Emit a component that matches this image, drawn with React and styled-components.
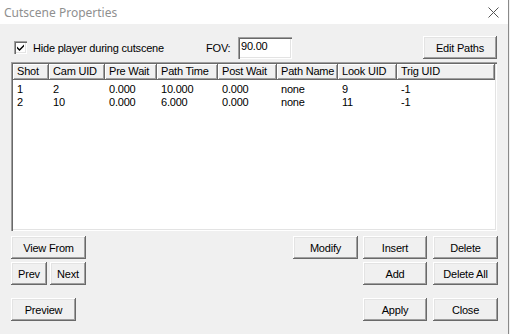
import React from "react";
import styled, { createGlobalStyle } from "styled-components";

const GlobalStyle = createGlobalStyle`
  html, body {
    margin: 0;
    padding: 0;
    background: #f0f0f0;
  }
  body {
    font-family: "Liberation Sans", Arial, sans-serif;
    font-size: 11px;
    letter-spacing: -0.2px;
    color: #000;
  }
`;

const Window = styled.div`
  width: 508px;
  height: 334px;
  background: #f0f0f0;
  border-right: 1px solid #8a8a8a;
  display: flex;
  flex-direction: column;
  overflow: hidden;
`;

const TitleBar = styled.div`
  height: 24px;
  flex: none;
  background: #fff;
  display: flex;
  align-items: center;
  justify-content: space-between;
  padding: 0 9px 0 4px;
`;

const Title = styled.span`
  font-family: "Noto Sans", "Open Sans", sans-serif;
  font-size: 12px;
  letter-spacing: 0;
  color: #8f8f8f;
`;

const Body = styled.div`
  display: flex;
  flex-direction: column;
  padding: 12px 10px 0 11px;
`;

const TopRow = styled.div`
  display: flex;
  align-items: center;
  height: 23px;
`;

const CheckLabel = styled.label`
  display: flex;
  align-items: center;
  gap: 6px;
  margin-left: 3px;
  width: 192px;
`;

const CheckBox = styled.span`
  width: 13px;
  height: 13px;
  box-sizing: border-box;
  background: #fff;
  box-shadow: inset 1px 1px #a0a0a0, inset 2px 2px #696969,
    inset -1px -1px #fff, inset -2px -2px #e3e3e3;
  display: flex;
  align-items: center;
  justify-content: center;
`;

const FovLabel = styled.span`
  width: 32px;
`;

const TextInput = styled.div`
  width: 54px;
  height: 22px;
  box-sizing: border-box;
  background: #fff;
  padding: 3px 0 0 3px;
  box-shadow: inset 1px 1px #a0a0a0, inset 2px 2px #696969,
    inset -1px -1px #fff, inset -2px -2px #e3e3e3;
`;

const Button = styled.button`
  width: ${(p) => p.$w || 65}px;
  height: 23px;
  flex: none;
  border: none;
  padding: 0;
  margin-left: ${(p) => p.$ml || 0}px;
  background: #f0f0f0;
  font-family: "Liberation Sans", Arial, sans-serif;
  font-size: 11px;
  letter-spacing: -0.2px;
  color: #000;
  box-shadow: inset -1px -1px #696969, inset 1px 1px #fff,
    inset -2px -2px #a0a0a0, inset 2px 2px #e3e3e3;
`;

const List = styled.div`
  margin-top: 3px;
  height: 169px;
  box-sizing: border-box;
  background: #fff;
  padding: 2px;
  box-shadow: inset 1px 1px #a0a0a0, inset 2px 2px #696969,
    inset -1px -1px #fff, inset -2px -2px #e3e3e3;
  margin-right: 1px;
`;

const HeaderRow = styled.div`
  display: flex;
  height: 16px;
`;

const HeaderCell = styled.div`
  width: ${(p) => p.$w}px;
  flex: ${(p) => (p.$grow ? 1 : "none")};
  box-sizing: border-box;
  padding: 1px 0 0 4px;
  background: #f0f0f0;
  line-height: 13px;
  white-space: nowrap;
  overflow: hidden;
  box-shadow: inset -1px -1px #696969, inset 1px 1px #fff,
    inset -2px -2px #a0a0a0;
`;

const Rows = styled.div`
  padding-top: 2px;
`;

const DataRow = styled.div`
  display: flex;
  height: 13px;
  align-items: center;
`;

const DataCell = styled.div`
  width: ${(p) => p.$w}px;
  flex: ${(p) => (p.$grow ? 1 : "none")};
  box-sizing: border-box;
  padding-left: 4px;
  white-space: nowrap;
`;

const ButtonRow = styled.div`
  display: flex;
  justify-content: space-between;
  margin-top: ${(p) => p.$mt}px;
`;

const Group = styled.div`
  display: flex;
  gap: ${(p) => p.$gap || 5}px;
`;

const columns = [
  { title: "Shot", w: 36 },
  { title: "Cam UID", w: 56 },
  { title: "Pre Wait", w: 52 },
  { title: "Path Time", w: 61 },
  { title: "Post Wait", w: 59 },
  { title: "Path Name", w: 61 },
  { title: "Look UID", w: 59 },
  { title: "Trig UID", grow: true },
];

const rows = [
  ["1", "2", "0.000", "10.000", "0.000", "none", "9", "-1"],
  ["2", "10", "0.000", "6.000", "0.000", "none", "11", "-1"],
];

const CloseIcon = () => (
  <svg width="11" height="11" viewBox="0 0 11 11">
    <path d="M0.5 0.5 L10.5 10.5 M10.5 0.5 L0.5 10.5" stroke="#555" strokeWidth="1" />
  </svg>
);

const CheckMark = () => (
  <svg width="9" height="9" viewBox="0 0 9 9">
    <path d="M1 3.5 L3.5 6 L8 1.5 L8 3.5 L3.5 8 L1 5.5 Z" fill="#000" />
  </svg>
);

export default function App() {
  return (
    <>
      <GlobalStyle />
      <Window>
        <TitleBar>
          <Title>Cutscene Properties</Title>
          <CloseIcon />
        </TitleBar>
        <Body>
          <TopRow>
            <CheckLabel>
              <CheckBox>
                <CheckMark />
              </CheckBox>
              Hide player during cutscene
            </CheckLabel>
            <FovLabel>FOV:</FovLabel>
            <TextInput>90.00</TextInput>
            <Button $w={74} $ml={131}>Edit Paths</Button>
          </TopRow>
          <List>
            <HeaderRow>
              {columns.map((c) => (
                <HeaderCell key={c.title} $w={c.w} $grow={c.grow}>
                  {c.title}
                </HeaderCell>
              ))}
            </HeaderRow>
            <Rows>
              {rows.map((r) => (
                <DataRow key={r[0]}>
                  {r.map((v, i) => (
                    <DataCell key={i} $w={columns[i].w} $grow={columns[i].grow}>
                      {v}
                    </DataCell>
                  ))}
                </DataRow>
              ))}
            </Rows>
          </List>
          <ButtonRow $mt={5}>
            <Button $w={75}>View From</Button>
            <Group>
              <Button $w={65}>Modify</Button>
              <Button $w={64}>Insert</Button>
              <Button $w={65} $ml={1}>Delete</Button>
            </Group>
          </ButtonRow>
          <ButtonRow $mt={3}>
            <Group $gap={3}>
              <Button $w={36}>Prev</Button>
              <Button $w={36}>Next</Button>
            </Group>
            <Group $gap={6}>
              <Button $w={64}>Add</Button>
              <Button $w={65}>Delete All</Button>
            </Group>
          </ButtonRow>
          <ButtonRow $mt={13}>
            <Button $w={65}>Preview</Button>
            <Group $gap={6}>
              <Button $w={64}>Apply</Button>
              <Button $w={65}>Close</Button>
            </Group>
          </ButtonRow>
        </Body>
      </Window>
    </>
  );
}
